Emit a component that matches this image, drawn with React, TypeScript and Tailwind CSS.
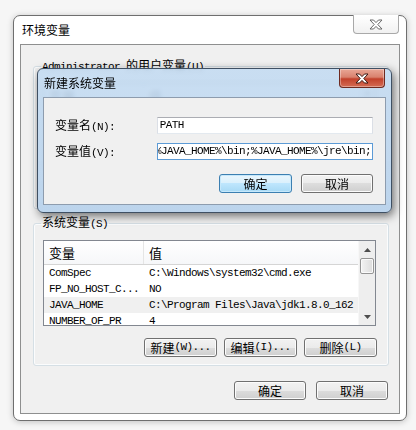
import type { ReactNode } from "react";

const mono = "font-['Liberation_Mono','Noto_Sans_CJK_SC',monospace] text-[11px] tracking-[-0.6px]";

type Row = { name: string; value: string; selected?: boolean };

const systemRows: Row[] = [
  { name: "ComSpec", value: "C:\\Windows\\system32\\cmd.exe" },
  { name: "FP_NO_HOST_C...", value: "NO" },
  { name: "JAVA_HOME", value: "C:\\Program Files\\Java\\jdk1.8.0_162", selected: true },
  { name: "NUMBER_OF_PR", value: "4" },
];

const userRows: Row[] = [
  { name: "TEMP", value: "%USERPROFILE%\\AppData\\Local\\Temp" },
  { name: "TMP", value: "%USERPROFILE%\\AppData\\Local\\Temp" },
];

function XGlyph({ fill, stroke }: { fill: string; stroke: string }) {
  return (
    <svg width="14" height="11" viewBox="-1 -1 14 11">
      <polygon
        points="0,0 3.5,0 6,2.6 8.5,0 12,0 7.8,4.5 12,9 8.5,9 6,6.4 3.5,9 0,9 4.2,4.5"
        fill={fill}
        stroke={stroke}
        strokeWidth="1"
        strokeLinejoin="round"
      />
    </svg>
  );
}

// Chinese caption followed by the mnemonic part in the narrow latin face
function Hot({ zh, tail }: { zh: string; tail: string }) {
  return (
    <>
      {zh}
      <span className={mono}>{tail}</span>
    </>
  );
}

function Btn({ children, primary, className = "w-[72px]" }: { children: ReactNode; primary?: boolean; className?: string }) {
  return (
    <button
      type="button"
      className={`${className} h-[19px] rounded-[3px] border flex items-center justify-center leading-none text-[12px] text-black ${
        primary
          ? "border-[#3c7fb1] bg-[linear-gradient(to_bottom,#eaf6fd_0%,#d9f0fc_50%,#bee6fd_50%,#a7d9f5_100%)] shadow-[inset_0_0_0_1px_#c6e8fb]"
          : "border-[#707070] bg-[linear-gradient(to_bottom,#f2f2f2_0%,#ebebeb_50%,#dddddd_50%,#cfcfcf_100%)] shadow-[inset_0_0_0_1px_#fcfcfc]"
      }`}
    >
      {children}
    </button>
  );
}

function Arrow({ up }: { up?: boolean }) {
  return (
    <svg width="7" height="4" viewBox="0 0 7 4">
      <polygon points={up ? "3.5,0 7,4 0,4" : "0,0 7,0 3.5,4"} fill="#4d4d4d" />
    </svg>
  );
}

function VarList({ rows }: { rows: Row[] }) {
  return (
    <div className="w-[333px] h-[86px] shrink-0 border border-[#828790] bg-white flex overflow-hidden">
      <div className="flex-1 min-w-0 flex flex-col">
        <div className="h-[24px] shrink-0 flex border-b border-[#d5d5d5] bg-[linear-gradient(to_bottom,#ffffff,#f6f7f9)]">
          <div className="w-[100px] border-r border-[#e5e5e5] pl-[5px] flex items-center text-[13px]">变量</div>
          <div className="flex-1 pl-[5px] flex items-center text-[13px]">值</div>
        </div>
        {rows.map((r) => (
          <div key={r.name} className={`h-[16px] shrink-0 flex items-center ${mono} ${r.selected ? "bg-[#f0f0f0]" : ""}`}>
            <div className="w-[100px] pl-[5px] whitespace-pre">{r.name}</div>
            <div className="pl-[5px] whitespace-pre">{r.value}</div>
          </div>
        ))}
      </div>
      <div className="w-[17px] shrink-0 flex flex-col bg-[#eeeeee] border-l border-[#f7f7f7]">
        <div className="h-[17px] flex items-center justify-center">
          <Arrow up />
        </div>
        <div className="h-[16px] mx-[1px] border border-[#959595] rounded-[2px] bg-[linear-gradient(to_right,#f3f3f3,#dcdcdc)] shadow-[inset_0_0_0_1px_#fafafa]" />
        <div className="flex-1" />
        <div className="h-[17px] flex items-center justify-center">
          <Arrow />
        </div>
      </div>
    </div>
  );
}

function Group({ legend, rows, className }: { legend: ReactNode; rows: Row[]; className: string }) {
  return (
    <fieldset className={`${className} w-[356px] border border-[#d5dfe5] rounded-[3px] pl-[9px] pt-[9px] pb-[8px] pr-[11px] shadow-[inset_0_0_0_1px_#fbfcfd]`}>
      <legend className="-ml-[2px] px-[1px] leading-[14px] text-[12px]">{legend}</legend>
      <VarList rows={rows} />
      <div className="mt-[12px] flex justify-end gap-[7px]">
        <Btn className="w-[73px]">
          <Hot zh="新建" tail="(W)..." />
        </Btn>
        <Btn className="w-[73px]">
          <Hot zh="编辑" tail="(I)..." />
        </Btn>
        <Btn className="w-[73px]">
          <Hot zh="删除" tail="(L)" />
        </Btn>
      </div>
    </fieldset>
  );
}

export default function App() {
  return (
    <div className="relative w-[416px] h-[430px] overflow-hidden bg-[#f6f6f6] pt-[15px] pl-[13px] font-['Noto_Sans_CJK_SC',sans-serif] text-[12px] text-black">
      {/* 环境变量 window */}
      <div className="relative w-[394px] h-[406px] bg-white border border-[#6f6f6f] rounded-[7px] shadow-[0_1px_6px_rgba(0,0,0,0.22)] px-[6px] pb-[6px] flex flex-col">
        <div className="h-[28px] shrink-0 flex items-center pl-[2px] text-[12px]">环境变量</div>
        <div className="absolute -top-[1px] right-[7px] w-[46px] h-[19px] border border-t-0 border-[#a9a9a9] rounded-b-[4px] bg-[linear-gradient(to_bottom,#ffffff,#f1f1f1)] flex items-center justify-center">
          <XGlyph fill="#ffffff" stroke="#6a6a6a" />
        </div>
        <div className="flex-1 border border-[#8e8f8f] bg-[#f0f0f0] flex flex-col pl-[12px]">
          <Group
            className="mt-[13px]"
            legend={
              <>
                <span className={mono}>Administrator </span>的用户变量<span className={mono}>(U)</span>
              </>
            }
            rows={userRows}
          />
          <Group
            className="mt-[6px]"
            legend={<Hot zh="系统变量" tail="(S)" />}
            rows={systemRows}
          />
          <div className="mt-[15px] flex justify-end gap-[10px] pr-[11px]">
            <Btn>确定</Btn>
            <Btn>取消</Btn>
          </div>
        </div>
      </div>

      {/* 新建系统变量 dialog, over the window */}
      <div className="absolute left-[37px] top-[68px] w-[355px] h-[145px] rounded-[6px] border border-[#3f5063] bg-[linear-gradient(to_bottom,rgba(196,219,241,0.9),rgba(184,210,236,0.93))] backdrop-blur-[2px] shadow-[2px_3px_10px_rgba(0,0,0,0.55)] px-[5px] pb-[7px] flex flex-col">
        <div className="h-[28px] shrink-0 flex items-center pl-[1px] text-[12px]">新建系统变量</div>
        <div className="absolute top-0 right-[6px] w-[46px] h-[19px] border border-t-0 border-[#6e2a20] rounded-b-[4px] bg-[linear-gradient(to_bottom,#e9a796_0%,#d9826e_45%,#c2412b_55%,#d46c54_100%)] shadow-[inset_0_0_0_1px_rgba(255,255,255,0.35)] flex items-center justify-center">
          <XGlyph fill="#ffffff" stroke="#3b1a14" />
        </div>
        <div className="flex-1 border border-[#8d9cae] bg-[#f0f0f0] pt-[19px] pl-[11px] pr-[12px] flex flex-col">
          <div className="h-[17px] flex items-center">
            <div className="w-[102px]">
              <Hot zh="变量名" tail="(N):" />
            </div>
            <div className={`w-[217px] h-[17px] border border-[#abadb3] border-b-[#e3e9ef] border-x-[#dbdfe6] bg-white flex items-center pl-[2px] ${mono}`}>
              PATH
            </div>
          </div>
          <div className="mt-[9px] h-[17px] flex items-center">
            <div className="w-[102px]">
              <Hot zh="变量值" tail="(V):" />
            </div>
            <div className={`w-[217px] h-[17px] border border-[#5c9bd6] bg-white flex items-center justify-end pr-[1px] overflow-hidden whitespace-pre ${mono}`}>
              <span className="shrink-0">;%JAVA_HOME%\bin;%JAVA_HOME%\jre\bin;</span>
            </div>
          </div>
          <div className="mt-[14px] flex justify-end gap-[9px]">
            <Btn primary className="w-[73px]">确定</Btn>
            <Btn className="w-[72px]">取消</Btn>
          </div>
        </div>
      </div>
    </div>
  );
}
